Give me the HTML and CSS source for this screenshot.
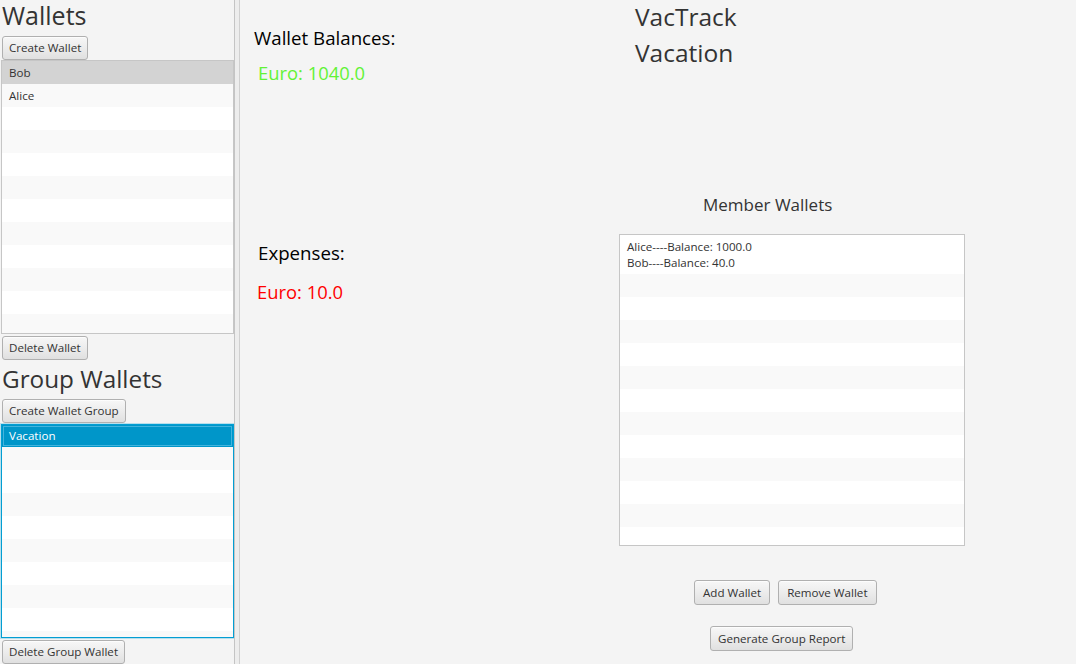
FILE: index.html
```html
<!DOCTYPE html>
<html>
<head>
<meta charset="utf-8">
<title>VacTrack</title>
<link rel="stylesheet" href="styles.css">
</head>
<body>
<div class="app">
  <aside class="left">
    <div class="title">Wallets</div>
    <button class="btn">Create Wallet</button>
    <div class="list list-wallets">
      <div class="row row-picked">Bob</div>
      <div class="row">Alice</div>
      <div class="row"></div><div class="row"></div><div class="row"></div><div class="row"></div>
      <div class="row"></div><div class="row"></div><div class="row"></div><div class="row"></div>
      <div class="row"></div><div class="row"></div>
    </div>
    <button class="btn btn-after">Delete Wallet</button>
    <div class="title title-group">Group Wallets</div>
    <button class="btn">Create Wallet Group</button>
    <div class="list list-groups">
      <div class="row row-selected">Vacation</div>
      <div class="row"></div><div class="row"></div><div class="row"></div><div class="row"></div>
      <div class="row"></div><div class="row"></div><div class="row"></div><div class="row"></div>
      <div class="row"></div>
    </div>
    <button class="btn btn-after">Delete Group Wallet</button>
  </aside>
  <div class="divider"></div>
  <main class="right">
    <section class="summary">
      <div class="label-lg lbl-balances">Wallet Balances:</div>
      <div class="amount amount-green">Euro: 1040.0</div>
      <div class="label-lg lbl-expenses">Expenses:</div>
      <div class="amount amount-red">Euro: 10.0</div>
    </section>
    <section class="group">
      <div class="group-title">VacTrack</div>
      <div class="group-name">Vacation</div>
      <div class="members-title">Member Wallets</div>
      <div class="list list-members">
        <div class="member-cell">
          <div>Alice----Balance: 1000.0</div>
          <div>Bob----Balance: 40.0</div>
        </div>
        <div class="row"></div><div class="row"></div><div class="row"></div><div class="row"></div>
        <div class="row"></div><div class="row"></div><div class="row"></div><div class="row"></div>
        <div class="row"></div><div class="row"></div><div class="row"></div><div class="row"></div>
      </div>
      <div class="actions">
        <button class="btn btn-r">Add Wallet</button>
        <button class="btn btn-r">Remove Wallet</button>
      </div>
      <button class="btn btn-r btn-report">Generate Group Report</button>
    </section>
  </main>
</div>
</body>
</html>
```
FILE: styles.css
```css
html, body {
  margin: 0;
  padding: 0;
  height: 100%;
}

body {
  background: #f4f4f4;
  font-family: "Open Sans", "Noto Sans", sans-serif;
  color: #333;
  overflow: hidden;
}

.app {
  display: flex;
  height: 664px;
}

/* ---------- left pane ---------- */
.left {
  width: 233px;
  padding-left: 1px;
  display: flex;
  flex-direction: column;
  align-items: flex-start;
  flex: none;
}

.title {
  font-size: 25px;
  line-height: 31px;
  height: 36px;
  padding-left: 1px;
  color: #333;
  box-sizing: border-box;
  white-space: nowrap;
}

.title-group {
  font-size: 24.3px;
  height: 39px;
  padding-top: 3px;
}

.btn {
  font-family: "Open Sans", "Noto Sans", sans-serif;
  font-size: 11.6px;
  color: #333;
  height: 24px;
  line-height: 22px;
  padding: 0 6px;
  margin: 0 0 0 1px;
  border: 1px solid #b0b0b0;
  border-radius: 3px;
  background: linear-gradient(to bottom, #f7f7f7 0%, #ececec 50%, #e0e0e0 100%);
  box-shadow: inset 0 1px 0 rgba(255, 255, 255, 0.7);
  box-sizing: border-box;
  white-space: nowrap;
  cursor: default;
}

.btn-after {
  margin-top: 2px;
}

.list {
  box-sizing: border-box;
  border: 1px solid #c6c6c6;
  background: #fff;
  overflow: hidden;
  font-size: 11.6px;
  color: #333;
}

.list-wallets {
  width: 233px;
  height: 276px;
}

.list-groups {
  width: 233px;
  height: 216px;
  margin-top: 1px;
  border-color: #039ed3;
  box-shadow: 0 0 0 1px rgba(3, 158, 211, 0.25);
}

.row {
  height: 23px;
  line-height: 23px;
  padding-left: 7px;
  background: #fff;
  white-space: nowrap;
}

.row:nth-child(even) {
  background: #f9f9f9;
}

.row-picked {
  background: #d3d3d3;
}

.row.row-selected {
  height: 22px;
  line-height: 22px;
  background: #0096c9;
  color: #fff;
  box-shadow: inset 0 0 0 1px #0096c9, inset 0 0 0 2px #43b4dd;
}

/* ---------- divider ---------- */
.divider {
  width: 4px;
  flex: none;
  background: #ededed;
  border-left: 1px solid #c4c4c4;
  border-right: 1px solid #d0d0d0;
}

/* ---------- right pane ---------- */
.right {
  flex: 1;
  display: flex;
}

.summary {
  width: 379px;
  flex: none;
  display: flex;
  flex-direction: column;
  align-items: flex-start;
}

.label-lg {
  font-size: 18.7px;
  line-height: 25px;
  color: #000;
  white-space: nowrap;
}

.lbl-balances {
  margin-top: 25px;
  margin-left: 14px;
}

.amount {
  font-size: 18.4px;
  line-height: 25px;
  white-space: nowrap;
}

.amount-green {
  color: #62f236;
  margin-top: 10px;
  margin-left: 18px;
}

.lbl-expenses {
  margin-top: 155px;
  margin-left: 18px;
}

.amount-red {
  color: #ff0000;
  margin-top: 14px;
  margin-left: 17px;
}

.group {
  width: 346px;
  flex: none;
  display: flex;
  flex-direction: column;
  align-items: flex-start;
}

.group-title,
.group-name {
  font-size: 24.5px;
  line-height: 33px;
  color: #333;
  padding-left: 16px;
  white-space: nowrap;
}

.group-name {
  margin-top: 3px;
}

.members-title {
  font-size: 17px;
  line-height: 23px;
  margin-top: 124px;
  margin-left: 84px;
  color: #333;
  white-space: nowrap;
}

.list-members {
  width: 346px;
  height: 312px;
  margin-top: 18px;
}

.member-cell {
  height: 39px;
  box-sizing: border-box;
  padding: 4px 0 0 7px;
  line-height: 16px;
  background: #fff;
  white-space: nowrap;
}

.list-members .row:nth-child(even) {
  background: #f9f9f9;
}

.list-members .row:nth-child(odd) {
  background: #fff;
}

.actions {
  display: flex;
  gap: 8px;
  margin-top: 34px;
  margin-left: 75px;
}

.btn-r {
  height: 25px;
  line-height: 23px;
  margin-left: 0;
  padding: 0 8px;
}

.btn-report {
  margin-top: 21px;
  margin-left: 91px;
  padding: 0 7px;
}
```
